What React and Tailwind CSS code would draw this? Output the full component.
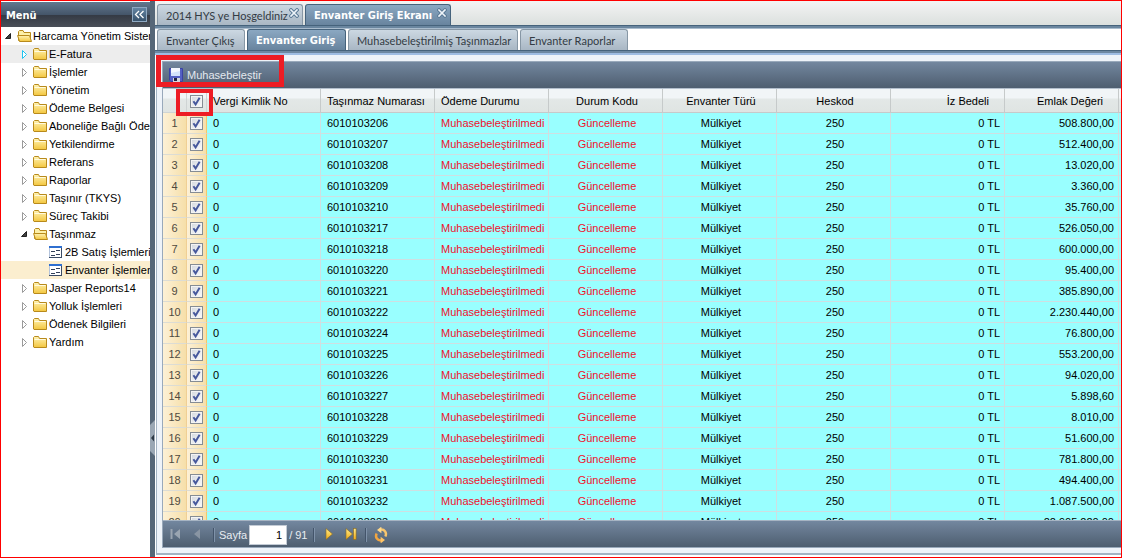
import React from "react";

const MENU = [
  { label: "E-Fatura", hover: true },
  { label: "İşlemler" },
  { label: "Yönetim" },
  { label: "Ödeme Belgesi" },
  { label: "Aboneliğe Bağlı Ödemeler" },
  { label: "Yetkilendirme" },
  { label: "Referans" },
  { label: "Raporlar" },
  { label: "Taşınır (TKYS)" },
  { label: "Süreç Takibi" },
  {
    label: "Taşınmaz",
    children: [{ label: "2B Satış İşlemleri" }, { label: "Envanter İşlemleri", selected: true }],
  },
  { label: "Jasper Reports14" },
  { label: "Yolluk İşlemleri" },
  { label: "Ödenek Bilgileri" },
  { label: "Yardım" },
];

const ROWS = [
  ["6010103206", "508.800,00"],
  ["6010103207", "512.400,00"],
  ["6010103208", "13.020,00"],
  ["6010103209", "3.360,00"],
  ["6010103210", "35.760,00"],
  ["6010103217", "526.050,00"],
  ["6010103218", "600.000,00"],
  ["6010103220", "95.400,00"],
  ["6010103221", "385.890,00"],
  ["6010103222", "2.230.440,00"],
  ["6010103224", "76.800,00"],
  ["6010103225", "553.200,00"],
  ["6010103226", "94.020,00"],
  ["6010103227", "5.898,60"],
  ["6010103228", "8.010,00"],
  ["6010103229", "51.600,00"],
  ["6010103230", "781.800,00"],
  ["6010103231", "494.400,00"],
  ["6010103232", "1.087.500,00"],
  ["6010103233", "22.905.220,00"],
];

const COLUMNS = [
  ["Vergi Kimlik No", "text-left"],
  ["Taşınmaz Numarası", "text-left"],
  ["Ödeme Durumu", "text-left"],
  ["Durum Kodu", "text-center"],
  ["Envanter Türü", "text-center"],
  ["Heskod", "text-center"],
  ["İz Bedeli", "text-right"],
  ["Emlak Değeri", "text-right"],
];

function FolderIcon({ open }) {
  return (
    <svg className="h-4 w-4 shrink-0" viewBox="0 0 16 16" aria-hidden="true">
      <defs>
        <linearGradient id="folderFill" x1="0" y1="0" x2="0" y2="1">
          <stop offset="0" stopColor="#fff3b4" />
          <stop offset="1" stopColor="#f3c63e" />
        </linearGradient>
      </defs>
      {open ? (
        <>
          <path d="M1.5 12.5V3.5L2.5 2.5H6L7 4.5H13.5V12.5Z" fill="#fdf0a8" stroke="#b88a1c" />
          <path d="M0.6 7.5H12.5L14.5 13.5H2.5Z" fill="url(#folderFill)" stroke="#b88a1c" strokeLinejoin="round" />
        </>
      ) : (
        <>
          <path d="M0.5 13V3.5L1.5 2.5H5.5L6.5 4.5H13.5V13.5H1Z" fill="url(#folderFill)" stroke="#b88a1c" strokeLinejoin="round" />
          <path d="M1.5 5.5H12.5" stroke="#fffbe0" />
        </>
      )}
    </svg>
  );
}

function FormIcon() {
  return (
    <svg className="h-4 w-4 shrink-0" viewBox="0 0 16 16" shapeRendering="crispEdges" aria-hidden="true">
      <rect x="0.5" y="2.5" width="12" height="11" fill="#fff" stroke="#b4c4dc" />
      <path d="M0 3H13" stroke="#2f6fd0" strokeWidth="2" />
      <path d="M2 7.5H6M2 11.5H6M7 6.5H11M7 10.5H11" stroke="#33415a" />
      <path d="M12.5 4V14M0 13.5H13" stroke="#3c4c66" />
    </svg>
  );
}

function Arrow({ open, hot }) {
  return (
    <svg className="h-4 w-4 shrink-0" viewBox="0 0 16 16" aria-hidden="true">
      {open ? (
        <path d="M9.5 5.5V10.5H4.5Z" fill="#404040" stroke="#222" />
      ) : (
        <path d="M5.5 4.5L9.5 8.5L5.5 12.5Z" fill="#fff" stroke={hot ? "#1fc4f0" : "#9a9a9a"} />
      )}
    </svg>
  );
}

function TreeRow({ item, depth }) {
  const open = Boolean(item.children);
  const pad = ["pl-0", "pl-4", "pl-8"][depth];
  const bg = item.hover ? "bg-[#ededed]" : item.selected ? "bg-[#fbeecf]" : "";
  return (
    <li>
      <button type="button" className={`flex h-[18px] w-full items-center whitespace-nowrap text-left ${pad} ${bg}`}>
        {depth < 2 ? <Arrow open={open} hot={item.hover} /> : <span className="w-4 shrink-0" />}
        {depth < 2 ? <FolderIcon open={open} /> : <FormIcon />}
        <span>{item.label}</span>
      </button>
      {open && (
        <ul>
          {item.children.map((c) => (
            <TreeRow key={c.label} item={c} depth={depth + 1} />
          ))}
        </ul>
      )}
    </li>
  );
}

function CloseIcon() {
  return (
    <svg className="h-[10px] w-[10px]" viewBox="0 0 10 10" aria-hidden="true">
      <path d="M2 2L8 8M8 2L2 8" stroke="#5b7a96" strokeWidth="3.6" strokeLinecap="square" />
      <path d="M2 2L8 8M8 2L2 8" stroke="#eef4f9" strokeWidth="1.6" strokeLinecap="square" />
    </svg>
  );
}

function Tab({ label, active, closable, width }) {
  const look = active
    ? "border-[#46637c] bg-linear-to-b from-[#8ba8c2] to-[#68849e] font-['DejaVu_Sans_Condensed','DejaVu_Sans',sans-serif] font-bold text-white"
    : "border-[#8797a5] bg-linear-to-b from-[#ccd8e2] to-[#a9b7c4] font-['Lato',sans-serif] text-[#333b44]";
  return (
    <div className={`flex h-[21px] shrink-0 rounded-t-[3px] border border-b-0 ${look} ${width}`}>
      <button type="button" role="tab" aria-selected={Boolean(active)} className="flex-1 whitespace-nowrap pl-2 pt-px text-left">
        {label}
      </button>
      {closable && (
        <button type="button" aria-label={`${label} kapat`} className="flex items-start pr-[3px] pt-[3px]">
          <CloseIcon />
        </button>
      )}
    </div>
  );
}

function Check({ label }) {
  return (
    <label className="mx-auto grid h-[13px] w-[13px]">
      <input
        type="checkbox"
        defaultChecked
        aria-label={label}
        className="peer col-start-1 row-start-1 h-[13px] w-[13px] appearance-none border border-[#858c94] bg-linear-to-br from-[#d3d8de] to-[#fbfbfc] shadow-[inset_0_0_0_1px_#f4f4f4]"
      />
      <svg className="pointer-events-none invisible col-start-1 row-start-1 h-[13px] w-[13px] peer-checked:visible" viewBox="0 0 13 13" aria-hidden="true">
        <path d="M3.4 6.2L5.6 9.4L9.6 2.8" fill="none" stroke="#46589c" strokeWidth="2" />
      </svg>
    </label>
  );
}

function Separator() {
  return <span className="h-[14px] w-[2px] border-l border-r border-l-[#43546a] border-r-[#7f92a9]" />;
}

function PagerButton({ label, gray, children }) {
  return (
    <button type="button" aria-label={label} disabled={gray} className="h-4 w-4">
      <svg viewBox="0 0 16 16" className="h-4 w-4" aria-hidden="true">
        <defs>
          <linearGradient id="gold" x1="0" y1="0" x2="0" y2="1">
            <stop offset="0" stopColor="#ffeb8a" />
            <stop offset="1" stopColor="#f0ac18" />
          </linearGradient>
        </defs>
        {children}
      </svg>
    </button>
  );
}

function Grid() {
  return (
    <table className="w-full table-fixed border-separate border-spacing-0">
      <colgroup>
        <col className="w-[24px]" />
        <col className="w-[20px]" />
        {COLUMNS.map(([name]) => (
          <col key={name} className="w-[114px]" />
        ))}
        <col />
      </colgroup>
      <thead>
        <tr className="h-[24px] bg-[linear-gradient(#f1f5f7_0_9px,#e3e8e7_10px,#dfe4e2)]">
          <th className="border-b border-r border-[#cfd4d4] p-0" />
          <th className="border-b border-r border-[#cfd4d4] p-0 pt-[2px]">
            <Check label="Tümünü seç" />
          </th>
          {COLUMNS.map(([name, align]) => (
            <th
              key={name}
              className={`whitespace-nowrap border-b border-r border-[#c6caca] p-0 pl-[6px] font-normal ${align} ${align === "text-right" ? "pr-[15px]" : "pr-[3px]"}`}
            >
              {name}
            </th>
          ))}
          <th className="border-b border-[#c6caca] p-0" />
        </tr>
      </thead>
      <tbody>
        {ROWS.map(([no, value], i) => {
          const cells = ["0", no, "Muhasebeleştirilmedi", "Güncelleme", "Mülkiyet", "250", "0 TL", value];
          return (
            <tr key={no} className="h-[21px] bg-[#99ffff]">
              <td className="border-b border-r border-b-[#dcdcd4] border-r-[#f0cf94] bg-linear-to-r from-[#fdf1d6] to-[#f6dfa9] p-0 text-center text-[#4f4a40]">
                {i + 1}
              </td>
              <td className="border-b border-r border-b-[#dcdcd4] border-r-[#f5c76c] bg-linear-to-r from-[#fdf1d6] to-[#f6dfa9] p-0">
                <Check label={`Satır ${i + 1}`} />
              </td>
              {cells.map((text, c) => (
                <td
                  key={c}
                  className={`whitespace-nowrap border-b border-r border-[#cfdfe1] p-0 pl-[6px] ${COLUMNS[c][1]} ${c > 5 ? "pr-1" : "pr-[3px]"} ${c === 2 || c === 3 ? "text-[#f0102c]" : ""}`}
                >
                  {text}
                </td>
              ))}
              <td className="border-b border-[#cfdfe1] p-0" />
            </tr>
          );
        })}
      </tbody>
    </table>
  );
}

export default function App() {
  return (
    <div className="flex h-screen overflow-hidden border border-[#f00] bg-white font-['Liberation_Sans',Arial,sans-serif] text-[11px] leading-[14px] text-black">
      <nav className="w-[149px] shrink-0 overflow-hidden">
        <header className="flex h-[26px] items-center justify-between border-t border-white bg-[linear-gradient(#62788e,#45566a_50%,#343a44_52%,#4a4f58)] pl-[5px] pr-[3px] font-['DejaVu_Sans_Condensed','DejaVu_Sans',sans-serif] font-bold text-white">
          <span className="pt-[3px]">Menü</span>
          <button type="button" aria-label="Menüyü daralt" className="h-[15px] w-[15px] border border-[#8fa9c2] bg-linear-to-b from-[#6485a3] to-[#38536d]">
            <svg viewBox="0 0 13 13" className="h-[13px] w-[13px]" aria-hidden="true">
              <path d="M6 3L2.5 6.5L6 10M10.5 3L7 6.5L10.5 10" fill="none" stroke="#fff" strokeWidth="1.3" />
            </svg>
          </button>
        </header>
        <ul>
          <li>
            <button type="button" className="flex h-[18px] w-full items-center whitespace-nowrap text-left">
              <Arrow open />
              <FolderIcon open />
              <span>Harcama Yönetim Sistemi</span>
            </button>
            <ul>
              {MENU.map((m) => (
                <TreeRow key={m.label} item={m} depth={1} />
              ))}
            </ul>
          </li>
        </ul>
      </nav>

      <div className="relative w-[5px] shrink-0 bg-[#566778]">
        <button type="button" aria-label="Bölmeyi daralt" className="absolute left-0 top-[419px] h-[36px] w-[5px]">
          <svg viewBox="0 0 5 36" className="h-[36px] w-[5px]" aria-hidden="true">
            <path d="M5 0V36L0 31V5Z" fill="#9aa7b4" />
            <path d="M4 14.5V21.5L1 18Z" fill="#2b3744" />
          </svg>
        </button>
      </div>

      <main className="relative flex min-w-0 flex-1 flex-col bg-white">
        <div role="tablist" className="flex h-[24px] shrink-0 items-end gap-[2px] bg-linear-to-b from-[#f4f4f4] to-[#dbe0de] pl-[2px]">
          <Tab label="2014 HYS ye Hoşgeldiniz" closable width="w-[146px]" />
          <Tab label="Envanter Giriş Ekranı" active closable width="w-[146px]" />
        </div>
        <div className="h-[4px] shrink-0 border-t border-b border-t-[#46637c] border-b-[#a9bccd] bg-[#6a869f]" />
        <div role="tablist" className="flex h-[21px] shrink-0 items-end gap-[2px] pl-[2px]">
          <Tab label="Envanter Çıkış" width="w-[88px]" />
          <Tab label="Envanter Giriş" active width="w-[99px]" />
          <Tab label="Muhasebeleştirilmiş Taşınmazlar" width="w-[170px]" />
          <Tab label="Envanter Raporlar" width="w-[108px]" />
        </div>
        <div className="h-[5px] shrink-0 border-t border-b-2 border-t-[#46637c] border-b-[#9fbde3] bg-[#6d88a2]" />

        <div className="mb-[2px] ml-[1px] flex min-h-0 flex-1 flex-col border-b-2 border-l border-[#a3b3c3] bg-[#eef3f9] pb-[5px] pl-[5px] pt-[6px]">
          <section className="flex min-h-0 flex-1 flex-col border-b border-l border-t border-[#99a9bb]">
            <div className="flex h-[27px] shrink-0 items-center border-b border-[#b3bfcc] bg-linear-to-b from-[#73879f] to-[#4e5e70] pl-[6px]">
              <button type="button" className="flex items-center gap-1 text-[#e4e9ef]">
                <svg viewBox="0 0 14 14" className="h-[14px] w-[14px]" aria-hidden="true">
                  <path d="M0.5 0.5H13.5V13.5H2L0.5 12Z" fill="#5460c4" stroke="#3a42a4" />
                  <rect x="2" y="0" width="9" height="8" fill="#f3f7ff" />
                  <path d="M2 8V5L11 3V8Z" fill="#d3e2fb" />
                  <rect x="4" y="10" width="7" height="4" fill="#d4d6de" />
                  <rect x="5" y="10" width="3" height="3" fill="#20233f" />
                </svg>
                <span>Muhasebeleştir</span>
              </button>
            </div>
            <div className="min-h-0 flex-1 overflow-hidden">
              <Grid />
            </div>
            <div className="flex h-[27px] shrink-0 items-center border-t border-[#a6b4c3] bg-linear-to-b from-[#73879f] to-[#4e5e70] pl-[5px] pt-px text-[#e9edf2]">
              <PagerButton label="İlk sayfa" gray>
                <path d="M3.5 2V12" stroke="#9aa5b1" strokeWidth="2" />
                <path d="M12 2V12L6 7Z" fill="#9aa5b1" />
              </PagerButton>
              <span className="w-[5px]" />
              <PagerButton label="Önceki sayfa" gray>
                <path d="M11 2V12L5 7Z" fill="#8995a3" />
              </PagerButton>
              <span className="w-[8px]" />
              <Separator />
              <label className="flex items-center gap-[2px] pl-1">
                Sayfa
                <input
                  type="text"
                  defaultValue="1"
                  className="h-[20px] w-[38px] border border-[#c3cbd5] bg-white pr-[4px] text-right text-black"
                />
              </label>
              <span className="pl-[2px] pr-[5px]">/ 91</span>
              <Separator />
              <span className="w-[6px]" />
              <PagerButton label="Sonraki sayfa">
                <path d="M5 1.5V12.5L11.5 7Z" fill="url(#gold)" stroke="#8a6a20" strokeWidth="0.6" />
              </PagerButton>
              <span className="w-[6px]" />
              <PagerButton label="Son sayfa">
                <path d="M3 1.5V12.5L9.5 7Z" fill="url(#gold)" stroke="#8a6a20" strokeWidth="0.6" />
                <rect x="10.5" y="1.5" width="2.6" height="11" fill="url(#gold)" stroke="#8a6a20" strokeWidth="0.6" />
              </PagerButton>
              <span className="w-[6px]" />
              <Separator />
              <span className="w-[6px]" />
              <PagerButton label="Yenile">
                <path d="M7.5 2.6C11.6 2.2 14.2 5.6 12.4 9.6" fill="none" stroke="#f9c66c" strokeWidth="2.4" />
                <path d="M8.4 -0.4L4 3L8.4 6.2Z" fill="#ffd98a" />
                <path d="M8.5 13.4C4.4 13.8 1.8 10.4 3.6 6.4" fill="none" stroke="#f3a640" strokeWidth="2.4" />
                <path d="M7.6 16.4L12 13L7.6 9.8Z" fill="#ffc568" />
              </PagerButton>
            </div>
          </section>
        </div>

        <span className="pointer-events-none absolute left-[1px] top-[54px] h-[32px] w-[128px] border-[5px] border-[#ed1c24]" />
        <span className="pointer-events-none absolute left-[21px] top-[88px] h-[27px] w-[37px] border-[4px] border-[#ed1c24]" />
      </main>
    </div>
  );
}
